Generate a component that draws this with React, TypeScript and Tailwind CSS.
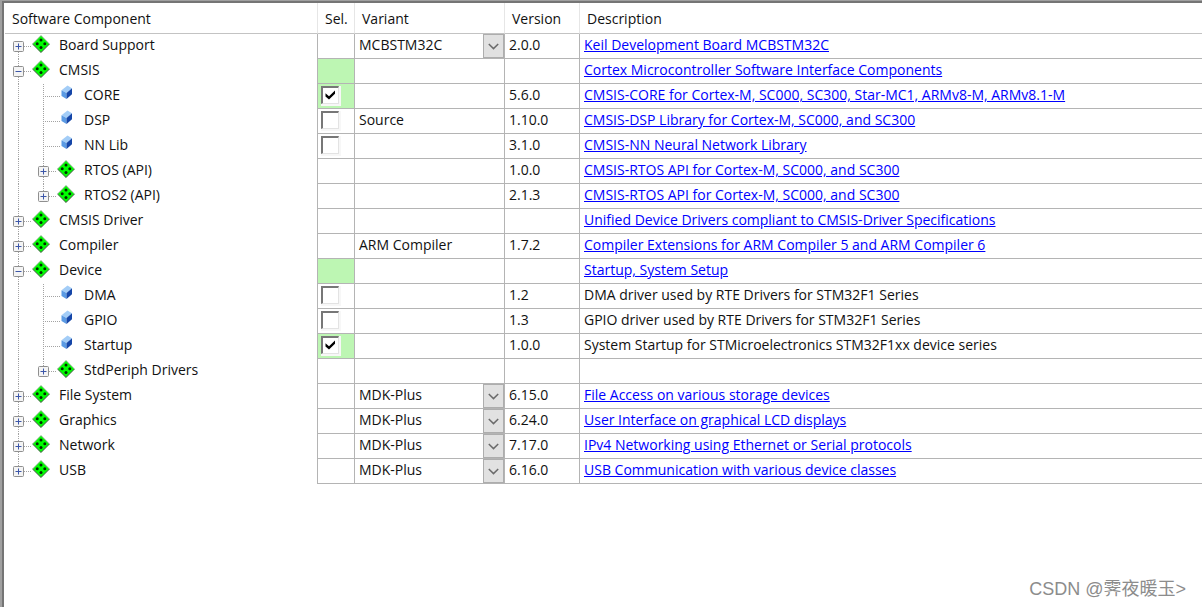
import { useState } from 'react';

interface Component {
  name: string;
  kind: 'group' | 'item';
  parent?: string;
  hasChildren?: boolean;
  first?: boolean;
  last?: boolean;
  checked?: boolean;
  highlight?: boolean;
  variant?: string;
  variants?: string[];
  version?: string;
  description?: string;
  link?: boolean;
}

const components: Component[] = [
  { name: 'Board Support', kind: 'group', first: true, variants: ['MCBSTM32C'], version: '2.0.0', description: 'Keil Development Board MCBSTM32C', link: true },
  { name: 'CMSIS', kind: 'group', hasChildren: true, highlight: true, description: 'Cortex Microcontroller Software Interface Components', link: true },
  { name: 'CORE', kind: 'item', parent: 'CMSIS', checked: true, version: '5.6.0', description: 'CMSIS-CORE for Cortex-M, SC000, SC300, Star-MC1, ARMv8-M, ARMv8.1-M', link: true },
  { name: 'DSP', kind: 'item', parent: 'CMSIS', checked: false, variant: 'Source', version: '1.10.0', description: 'CMSIS-DSP Library for Cortex-M, SC000, and SC300', link: true },
  { name: 'NN Lib', kind: 'item', parent: 'CMSIS', checked: false, version: '3.1.0', description: 'CMSIS-NN Neural Network Library', link: true },
  { name: 'RTOS (API)', kind: 'group', parent: 'CMSIS', version: '1.0.0', description: 'CMSIS-RTOS API for Cortex-M, SC000, and SC300', link: true },
  { name: 'RTOS2 (API)', kind: 'group', parent: 'CMSIS', last: true, version: '2.1.3', description: 'CMSIS-RTOS API for Cortex-M, SC000, and SC300', link: true },
  { name: 'CMSIS Driver', kind: 'group', description: 'Unified Device Drivers compliant to CMSIS-Driver Specifications', link: true },
  { name: 'Compiler', kind: 'group', variant: 'ARM Compiler', version: '1.7.2', description: 'Compiler Extensions for ARM Compiler 5 and ARM Compiler 6', link: true },
  { name: 'Device', kind: 'group', hasChildren: true, highlight: true, description: 'Startup, System Setup', link: true },
  { name: 'DMA', kind: 'item', parent: 'Device', checked: false, version: '1.2', description: 'DMA driver used by RTE Drivers for STM32F1 Series' },
  { name: 'GPIO', kind: 'item', parent: 'Device', checked: false, version: '1.3', description: 'GPIO driver used by RTE Drivers for STM32F1 Series' },
  { name: 'Startup', kind: 'item', parent: 'Device', checked: true, version: '1.0.0', description: 'System Startup for STMicroelectronics STM32F1xx device series' },
  { name: 'StdPeriph Drivers', kind: 'group', parent: 'Device', last: true },
  { name: 'File System', kind: 'group', variants: ['MDK-Plus'], version: '6.15.0', description: 'File Access on various storage devices', link: true },
  { name: 'Graphics', kind: 'group', variants: ['MDK-Plus'], version: '6.24.0', description: 'User Interface on graphical LCD displays', link: true },
  { name: 'Network', kind: 'group', variants: ['MDK-Plus'], version: '7.17.0', description: 'IPv4 Networking using Ethernet or Serial protocols', link: true },
  { name: 'USB', kind: 'group', last: true, variants: ['MDK-Plus'], version: '6.16.0', description: 'USB Communication with various device classes', link: true },
];

function GroupIcon() {
  return (
    <svg className="w-[18px] h-[18px]" viewBox="0 0 18 18" aria-hidden="true">
      <path d="M9 .6 17.4 9 9 17.4.6 9z" fill="#00ff00" stroke="#7d9a7d" strokeWidth=".8" />
      <path d="M.8 9.2 9 17.4 17.4 9" fill="none" stroke="#2c5a2c" strokeWidth=".8" />
      <g fill="#002a00">
        <circle cx="9" cy="5" r="1.5" />
        <circle cx="9" cy="12.6" r="1.5" />
        <circle cx="5.2" cy="8.8" r="1.5" />
        <circle cx="12.8" cy="8.8" r="1.5" />
      </g>
    </svg>
  );
}

function ItemIcon() {
  return (
    <svg className="ml-[4px] w-[12px] h-[15px]" viewBox="0 0 12 15" aria-hidden="true">
      <path d="M6.5.5 11 3.2 5.5 8 .5 5.2z" fill="#a3cdf7" />
      <path d="M.5 5.2 5.5 8v6L.5 11z" fill="#5b9be4" />
      <path d="M5.5 8 11 3.2v6L5.5 14z" fill="#1546a8" />
    </svg>
  );
}

// Dotted tree lines that run behind the expand box of a row
function Guides({ top, bottom, branch }: { top: boolean; bottom: boolean; branch: number }) {
  return (
    <svg className="absolute left-0 top-0 w-[30px] h-[25px]" viewBox="0 0 30 25" stroke="#a3a3a3" strokeDasharray="1 1" aria-hidden="true">
      {top && <path d="M12.5 0V12" />}
      {bottom && <path d="M12.5 12V25" />}
      {branch > 0 && <path d={`M12 12.5H${branch}`} />}
    </svg>
  );
}

function ExpandBox({ name, open, onClick }: { name: string; open: boolean; onClick: () => void }) {
  return (
    <button type="button" aria-label={name} aria-expanded={open} onClick={onClick} className="relative ml-[7px] w-[11px] h-[11px]">
      <svg className="w-[11px] h-[11px]" viewBox="0 0 11 11" aria-hidden="true">
        <rect x=".5" y=".5" width="10" height="10" rx="1" fill="#f4f4f4" stroke="#8f8f8f" />
        <path d="M2.5 5.5h6" stroke="#3c56a8" />
        {!open && <path d="M5.5 2.5v6" stroke="#3c56a8" />}
      </svg>
    </button>
  );
}

function SelectBox({ name, checked, onChange }: { name: string; checked: boolean; onChange: () => void }) {
  return (
    <label className="relative ml-[3px] block w-[20px] h-[20px] border-r-2 border-b-2 border-[#f7f7f7]">
      <input
        type="checkbox"
        aria-label={name}
        checked={checked}
        onChange={onChange}
        className="block w-[18px] h-[18px] appearance-none bg-white border-t-2 border-l-2 border-r border-b border-t-[#777777] border-l-[#777777] border-r-[#e3e3e3] border-b-[#e3e3e3]"
      />
      {checked && (
        <svg className="absolute left-[4px] top-[4px] w-[11px] h-[10px] pointer-events-none" viewBox="0 0 11 10" aria-hidden="true">
          <path d="M.5 3.2 4 6.2 10 .5v3.3L4 9.5.5 6.5z" fill="#000" />
        </svg>
      )}
    </label>
  );
}

function VariantSelect({ name, options }: { name: string; options: string[] }) {
  return (
    <div className="relative flex h-6 items-center">
      <select aria-label={`${name} variant`} className="h-6 w-full appearance-none bg-transparent pl-[4px] pr-6 pb-[2px] leading-5 outline-none">
        {options.map(o => (
          <option key={o}>{o}</option>
        ))}
      </select>
      <span className="absolute right-0 top-0 flex h-6 w-[21px] items-center justify-center border border-[#adadad] bg-[#e1e1e1] pointer-events-none">
        <svg className="w-[11px] h-[7px]" viewBox="0 0 11 7" fill="none" stroke="#6b6b6b" strokeWidth="1.5" aria-hidden="true">
          <path d="M.8 1 5.5 5.6 10.2 1" />
        </svg>
      </span>
    </div>
  );
}

export default function App() {
  const [closed, setClosed] = useState<string[]>([]);
  const [selected, setSelected] = useState<string[]>(components.filter(c => c.checked).map(c => c.name));

  function toggle(list: string[], name: string) {
    return list.includes(name) ? list.filter(n => n !== name) : [...list, name];
  }

  const rows = components.filter(c => !c.parent || !closed.includes(c.parent));
  const cell = 'h-[25px] p-0 border-r border-b border-[#b4b4b4]';
  const head = 'h-[31px] p-0 pt-[2px] text-left font-normal border-b border-b-[#c3c3c3] border-r border-r-[#e6e6e6]';

  return (
    <div className="flex min-h-screen border-t border-l-2 border-[#a0a0a0] bg-white">
      <main className="relative flex-1 border-t-2 border-l-2 border-[#757575] pl-px font-['Open_Sans','Noto_Sans',sans-serif] text-[14px] leading-5 text-[#111111]">
        <table className="w-full table-fixed border-separate border-spacing-0">
          <colgroup>
            <col className="w-[313px]" />
            <col className="w-[37px]" />
            <col className="w-[150px]" />
            <col className="w-[75px]" />
            <col />
          </colgroup>
          <thead>
            <tr>
              <th className={head}><span className="pl-[7px]">Software Component</span></th>
              <th className={head}><span className="pl-[7px]">Sel.</span></th>
              <th className={head}><span className="pl-[7px]">Variant</span></th>
              <th className={head}><span className="pl-[7px]">Version</span></th>
              <th className="h-[31px] p-0 pt-[2px] text-left font-normal border-b border-[#c3c3c3]"><span className="pl-[7px]">Description</span></th>
            </tr>
          </thead>
          <tbody>
            {rows.map(c => {
              const isSelected = selected.includes(c.name);
              const green = c.highlight || isSelected;
              return (
                <tr key={c.name}>
                  <td className="h-[25px] p-0 border-r border-[#b4b4b4]">
                    <div className="flex h-[25px] pl-px">
                      {c.parent && (
                        <span className="relative w-[25px]">
                          <Guides top bottom branch={0} />
                        </span>
                      )}
                      <span className="relative flex w-[25px] items-center">
                        <Guides top={!c.first} bottom={!c.last} branch={c.kind === 'group' ? 26 : 30} />
                        {c.kind === 'group' && (
                          <ExpandBox
                            name={c.name}
                            open={!!c.hasChildren && !closed.includes(c.name)}
                            onClick={() => c.hasChildren && setClosed(toggle(closed, c.name))}
                          />
                        )}
                      </span>
                      <span className="relative w-[28px] pt-px pl-px">
                        {c.kind === 'group' ? <GroupIcon /> : <ItemIcon />}
                      </span>
                      <span className="pt-px">{c.name}</span>
                    </div>
                  </td>
                  <td className={`${cell} ${green ? 'bg-[#bdf6b3]' : ''}`}>
                    {c.checked !== undefined && (
                      <SelectBox name={c.name} checked={isSelected} onChange={() => setSelected(toggle(selected, c.name))} />
                    )}
                  </td>
                  <td className={cell}>
                    {c.variants ? <VariantSelect name={c.name} options={c.variants} /> : <div className="pl-[4px] pb-[2px]">{c.variant}</div>}
                  </td>
                  <td className={cell}><div className="pl-[4px] pb-[2px]">{c.version}</div></td>
                  <td className="h-[25px] p-0 border-b border-[#b4b4b4] whitespace-nowrap">
                    <div className="pl-[4px] pb-[2px]">
                      {c.link ? <a href="#" className="text-[#0000ff] underline">{c.description}</a> : c.description}
                    </div>
                  </td>
                </tr>
              );
            })}
          </tbody>
        </table>
        <p className="absolute right-4 bottom-[6px] font-['Liberation_Sans','Noto_Sans_CJK_SC',sans-serif] text-[18px] leading-6 text-[#8c8c8c]">
          CSDN @霁夜暖玉&gt;
        </p>
      </main>
    </div>
  );
}
